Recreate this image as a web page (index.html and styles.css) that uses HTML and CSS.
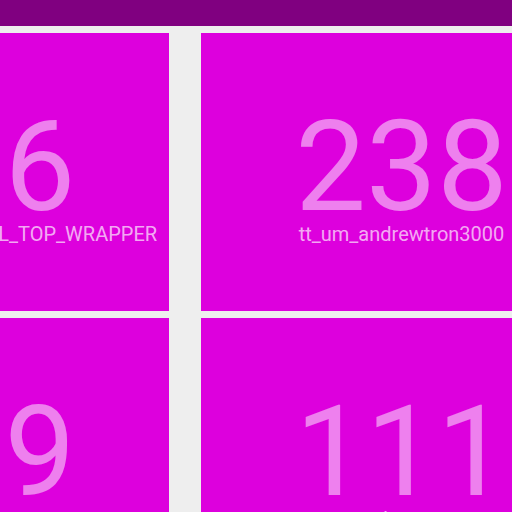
FILE: index.html
```html
<!DOCTYPE html>
<html>
<head>
<meta charset="utf-8">
<link rel="stylesheet" href="styles.css">
</head>
<body>
<header class="topbar"></header>
<main class="grid">
  <div class="tile"><div class="num">6</div><div class="label">tt_um_iLL_TOP_WRAPPER</div></div>
  <div class="tile"><div class="num">238</div><div class="label">tt_um_andrewtron3000</div></div>
  <div class="tile"><div class="num">9</div><div class="label">tt_um_wrapper</div></div>
  <div class="tile"><div class="num">111</div><div class="label">user_project_wrapper</div></div>
</main>
</body>
</html>
```
FILE: styles.css
```css
html, body {
  margin: 0;
  padding: 0;
  background: #eeeeee;
  overflow: hidden;
  font-family: Roboto, "Liberation Sans", sans-serif;
}
.topbar {
  height: 26px;
  background: #800080;
}
.grid {
  display: grid;
  grid-template-columns: 258px 401px;
  grid-auto-rows: 278px;
  column-gap: 32px;
  row-gap: 7px;
  margin-top: 7px;
  margin-left: -89px;
}
.tile {
  background: #dd00dd;
  display: flex;
  flex-direction: column;
  align-items: center;
  padding-top: 79px;
  box-sizing: border-box;
  color: rgba(255, 255, 255, 0.5);
  white-space: nowrap;
}
.num {
  font-size: 126px;
  line-height: 110px;
}
.label {
  font-size: 20px;
  line-height: 24px;
  color: rgba(255, 255, 255, 0.68);
}
```
